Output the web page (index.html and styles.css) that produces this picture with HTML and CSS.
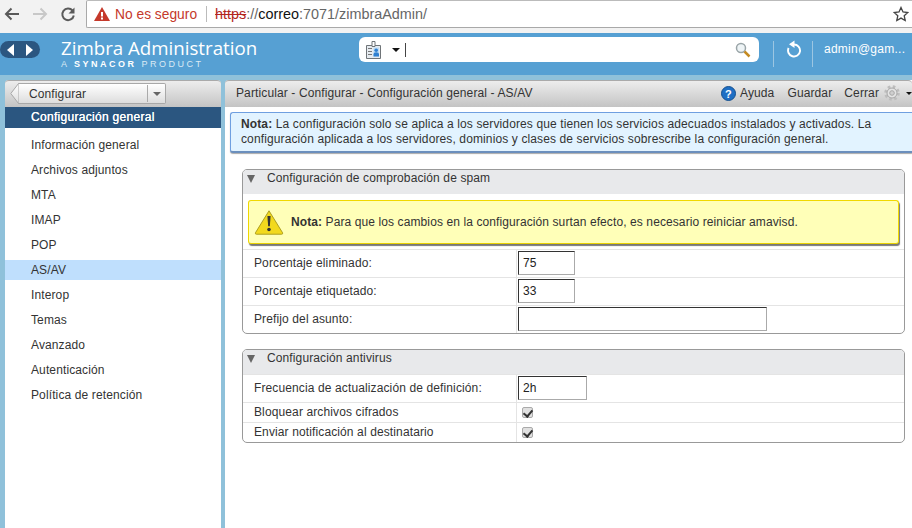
FILE: index.html
```html
<!DOCTYPE html>
<html>

<head>
    <meta charset="utf-8">
    <title>Zimbra Administration</title>
    <link rel="stylesheet" href="styles.css">
</head>

<body>
    <!-- browser chrome -->
    <div class="browser">
        <div class="nav-icons">
            <svg width="18" height="16" viewBox="0 0 18 16"><path d="M16 8H3.500M8.500 2.500L3 8l5.500 5.500" fill="none" stroke="#5a5a5a" stroke-width="2"/></svg>
            <svg width="18" height="16" viewBox="0 0 18 16"><path d="M2 8h12.500M9.500 2.500L15 8l-5.500 5.500" fill="none" stroke="#c8c8c8" stroke-width="2"/></svg>
            <svg width="18" height="16" viewBox="0 0 18 16"><path d="M13.500 4.500A5.800 5.800 0 1 0 14.800 9.500" fill="none" stroke="#5a5a5a" stroke-width="2"/><path d="M15.500 1.500v6h-6z" fill="#5a5a5a"/></svg>
        </div>
        <div class="urlbar">
            <svg class="warn" width="16" height="14" viewBox="0 0 16 14"><path d="M8 0l8 14H0z" fill="#c5392b"/><path d="M7 5h2v4.500H7zM7 10.500h2v2H7z" fill="#fff"/></svg>
            <span class="not-secure">No es seguro</span>
            <span class="url-sep"></span>
            <span class="url"><span class="https">https</span><span class="url-dim">://</span>correo<span class="url-dim">:7071/zimbraAdmin/</span></span>
            <svg class="star" width="16" height="16" viewBox="0 0 16 16"><path d="M8 1.500l2 4.500 4.800.5-3.600 3.200 1 4.800L8 12.100l-4.200 2.400 1-4.800L1.200 6.500 6 6z" fill="none" stroke="#444" stroke-width="1.300"/></svg>
        </div>
    </div>

    <!-- zimbra header -->
    <div class="header">
        <div class="history">
            <svg width="10" height="12" viewBox="0 0 10 12"><path d="M8 0v12L1 6z" fill="#fff"/></svg>
            <svg width="10" height="12" viewBox="0 0 10 12"><path d="M2 0v12l7-6z" fill="#fff"/></svg>
        </div>
        <div class="logo">
            <div class="logo-name">Zimbra Administration</div>
            <div class="logo-sub">A <b>SYNACOR</b> PRODUCT</div>
        </div>
        <div class="search">
            <svg width="15" height="18" viewBox="0 0 15 18"><path d="M.5 4.500h14v13H.5z" fill="#e6ebf0" stroke="#6f7478"/><path d="M6 .5h3v5H6z" fill="#fff" stroke="#6f7478"/><path d="M7.500 6.500h5.500v9H7.500z" fill="#bcdcf6"/><circle cx="10.200" cy="9.300" r="1.800" fill="#2f7fd0"/><path d="M7.500 15.500v-2.500q0-1.700 2.700-1.700t2.800 1.700v2.500z" fill="#2f7fd0"/><path d="M2 7h4v1H2zM2 10h4v1H2zM2 13h4v1H2z" fill="#777"/></svg>
            <span class="caret-down"></span>
            <span class="search-cursor"></span>
            <svg class="search-glass" width="16" height="16" viewBox="0 0 16 16"><circle cx="6" cy="6" r="4.500" fill="#eef4f6" stroke="#9aa5a8" stroke-width="1.500"/><path d="M9.500 9.500l5 5" stroke="#c48a22" stroke-width="2.500"/></svg>
        </div>
        <span class="head-sep first"></span>
        <svg class="refresh" width="16" height="18" viewBox="0 0 16 18"><path d="M8 4.500A6 6 0 1 1 2.600 8" fill="none" stroke="#fff" stroke-width="1.900"/><path d="M8.500.5v7.500L3 4.200z" fill="#fff"/></svg>
        <span class="head-sep"></span>
        <span class="user">admin@gam...</span>
    </div>

    <div class="main">
        <!-- left panel -->
        <div class="side">
            <div class="side-top">
                <div class="crumb">
                    <svg class="crumb-tip" width="9" height="21" viewBox="0 0 9 21">
                        <defs><linearGradient id="tipfill" x1="0" y1="0" x2="0" y2="1"><stop offset="0" stop-color="#fff"/><stop offset="1" stop-color="#ddd"/></linearGradient></defs>
                        <path d="M9 .5H8.500L.8 10.500l7.700 10H9z" fill="url(#tipfill)" stroke="#a8a8a8"/>
                    </svg>
                    <span class="crumb-label">Configurar</span>
                    <span class="crumb-arrow"></span>
                </div>
            </div>
            <div class="side-title">Configuración general</div>
            <ul class="side-list">
                <li>Información general</li>
                <li>Archivos adjuntos</li>
                <li>MTA</li>
                <li>IMAP</li>
                <li>POP</li>
                <li class="selected">AS/AV</li>
                <li>Interop</li>
                <li>Temas</li>
                <li>Avanzado</li>
                <li>Autenticación</li>
                <li>Política de retención</li>
            </ul>
        </div>

        <!-- content panel -->
        <div class="content">
            <div class="toolbar">
                <span class="path">Particular - Configurar - Configuración general - AS/AV</span>
                <svg class="help" width="15" height="15" viewBox="0 0 15 15"><circle cx="7.500" cy="7.500" r="7" fill="#1f6fc4" stroke="#15508f"/><text x="7.500" y="11.500" class="help-mark" text-anchor="middle">?</text></svg>
                <span class="tool ayuda">Ayuda</span>
                <span class="tool guardar">Guardar</span>
                <span class="tool cerrar">Cerrar</span>
                <svg class="gear" width="18" height="18" viewBox="0 0 18 18"><circle cx="9" cy="9" r="6.300" fill="none" stroke="#bdbdbd" stroke-width="3" stroke-dasharray="2.500 2.450"/><circle cx="9" cy="9" r="5" fill="#e4e4e4" stroke="#a8a8a8"/><circle cx="9" cy="9" r="2.300" fill="#cfcfcf" stroke="#a8a8a8"/></svg>
                <span class="caret-down small"></span>
            </div>

            <div class="info-note">
                <div><b>Nota:</b> La configuración solo se aplica a los servidores que tienen los servicios adecuados instalados y activados. La</div>
                <div>configuración aplicada a los servidores, dominios y clases de servicios sobrescribe la configuración general.</div>
            </div>

            <div class="section first-section">
                <div class="section-head"><span class="tri"></span>Configuración de comprobación de spam</div>
                <div class="warning">
                    <svg width="30" height="27" viewBox="0 0 32 28"><path d="M16 1.500L30.500 25q.5 1.500-1 1.500H2.500q-1.500 0-1-1.500z" fill="#f2d91d" stroke="#a89a1c"/><path d="M14.300 7h3.400l-.8 11h-1.800z" fill="#333"/><circle cx="16" cy="21.500" r="1.900" fill="#333"/></svg>
                    <span><b>Nota:</b> Para que los cambios en la configuración surtan efecto, es necesario reiniciar amavisd.</span>
                </div>
                <div class="row">
                    <label>Porcentaje eliminado:</label>
                    <div class="cell"><input class="small-input" type="text" value="75"></div>
                </div>
                <div class="row">
                    <label>Porcentaje etiquetado:</label>
                    <div class="cell"><input class="small-input" type="text" value="33"></div>
                </div>
                <div class="row">
                    <label>Prefijo del asunto:</label>
                    <div class="cell"><input class="wide-input" type="text"></div>
                </div>
            </div>

            <div class="section">
                <div class="section-head"><span class="tri"></span>Configuración antivirus</div>
                <div class="row">
                    <label>Frecuencia de actualización de definición:</label>
                    <div class="cell"><input class="mid-input" type="text" value="2h"></div>
                </div>
                <div class="row check-row">
                    <label>Bloquear archivos cifrados</label>
                    <div class="cell"><span class="check"></span></div>
                </div>
                <div class="row check-row">
                    <label>Enviar notificación al destinatario</label>
                    <div class="cell"><span class="check"></span></div>
                </div>
            </div>
        </div>
    </div>
</body>

</html>
```
FILE: styles.css
```css
* {
    box-sizing: border-box;
}

html, body {
    margin: 0;
    height: 528px;
    overflow: hidden;
}

body {
    width: 912px;
    font-family: "Liberation Sans", Arial, sans-serif;
    font-size: 12px;
    letter-spacing: .12px;
    color: #333;
    background: #fff;
}

/* browser */
.browser {
    height: 33px;
    background: #f2f2f2;
    display: flex;
    align-items: flex-start;
    padding-bottom: 5px;
}

.nav-icons {
    width: 86px;
    height: 28px;
    display: flex;
    align-items: center;
    gap: 10px;
    padding-left: 3px;
}

.urlbar {
    flex: 1;
    height: 28px;
    background: #fff;
    border: 1px solid #a9a9a9;
    border-right: 0;
    border-top-color: #bbb;
    border-radius: 2px 0 0 2px;
    display: flex;
    align-items: center;
    padding-left: 7px;
    font-size: 13.800px;
    letter-spacing: 0;
}

.warn {
    margin-right: 5px;
}

.not-secure {
    color: #c5392b;
}

.url-sep {
    width: 1px;
    height: 16px;
    background: #bbb;
    margin: 0 8px 0 9px;
}

.url {
    color: #111;
    font-size: 14.400px;
}

.url-dim {
    color: #666;
}

.https {
    color: #b3261e;
    text-decoration: line-through;
}

.star {
    margin-left: auto;
    margin-right: 3px;
}

/* header */
.header {
    height: 47px;
    background: linear-gradient(#56a0d3 0, #56a0d3 42px, #8fc1da 42px);
    display: flex;
    align-items: flex-start;
}

.history {
    width: 40px;
    height: 17px;
    margin-top: 8px;
    background: #2b5680;
    border-radius: 9px;
    display: flex;
    align-items: center;
    justify-content: center;
    gap: 8px;
}

.logo {
    margin-left: 21px;
    width: 298px;
    color: #fff;
}

.logo-name {
    font-family: "Open Sans", "Liberation Sans", sans-serif;
    font-size: 18.700px;
    font-weight: 500;
    letter-spacing: 0;
    line-height: 22px;
    margin-top: 4px;
}

.logo-sub {
    font-size: 9px;
    line-height: 10px;
    letter-spacing: 2.500px;
    color: #dbeaf4;
}

.logo-sub b {
    color: #fff;
}

.search {
    width: 400px;
    height: 25px;
    margin-top: 4px;
    background: #fff;
    border-radius: 6px;
    display: flex;
    align-items: center;
    padding: 0 7px;
}

.caret-down {
    width: 0;
    height: 0;
    border-left: 4px solid transparent;
    border-right: 4px solid transparent;
    border-top: 4px solid #111;
    margin-left: 11px;
}

.caret-down.small {
    flex-shrink: 0;
    border-left-width: 3px;
    border-right-width: 3px;
    border-top-width: 3px;
    margin-left: 5px;
}

.search-cursor {
    width: 1px;
    height: 14px;
    background: #444;
    margin-left: 5px;
}

.search-glass {
    margin-left: auto;
    margin-right: 1px;
}

.head-sep {
    width: 1px;
    height: 26px;
    margin-top: 8px;
    background: #9cc6e2;
}

.head-sep.first {
    margin-left: 14px;
}

.refresh {
    margin: 7px 10px 0 12px;
}

.user {
    color: #fff;
    margin: 8px 0 0 11px;
    white-space: nowrap;
    line-height: 16px;
    letter-spacing: .25px;
}

/* panels */
.main {
    height: 448px;
    background: #8fc1da;
    display: flex;
    gap: 4px;
    padding-left: 5px;
}

.side {
    width: 216px;
    background: #fff;
    border-radius: 4px 4px 0 0;
}

.side-top,
.toolbar {
    height: 27px;
    background: linear-gradient(#ededed, #c4c4c4);
    border-top: 1px solid #aaa;
    border-radius: 4px 4px 0 0;
}

.side-top {
    padding: 2px 0 0 13px;
}

.crumb {
    width: 148px;
    height: 21px;
    display: flex;
    align-items: center;
    background: linear-gradient(#fff, #ddd);
    border: 1px solid #a8a8a8;
    border-left: 0;
    border-radius: 0 2px 2px 0;
    position: relative;
    padding-left: 11px;
}

.crumb-tip {
    position: absolute;
    left: -8px;
    top: -1px;
}

.crumb-label {
    flex: 1;
}

.crumb-arrow {
    width: 18px;
    height: 17px;
    border-left: 1px solid #aaa;
    position: relative;
}

.crumb-arrow::after {
    content: "";
    position: absolute;
    left: 5px;
    top: 7px;
    border-left: 4px solid transparent;
    border-right: 4px solid transparent;
    border-top: 4px solid #666;
}

.side-title {
    height: 21px;
    background: #2b5680;
    color: #fff;
    padding: 3px 0 0 26px;
    line-height: 15px;
    letter-spacing: .3px;
    text-shadow: 0 0 0 #fff;
}

.side-list {
    list-style: none;
    margin: 7px 0 0;
    padding: 0;
}

.side-list li {
    height: 20px;
    line-height: 20px;
    margin-bottom: 5px;
    padding-left: 26px;
}

.side-list .selected {
    background: #bfdffd;
}

.content {
    flex: 1;
    min-width: 0;
    background: #fff;
    border-radius: 4px 0 0 0;
}

.toolbar {
    display: flex;
    align-items: center;
    padding: 0 0 2px 11px;
}

.path {
    width: 485px;
    flex-shrink: 0;
}

.help {
    flex-shrink: 0;
    margin-right: 4px;
}

.help-mark {
    font-family: "Liberation Sans", sans-serif;
    font-size: 11px;
    font-weight: bold;
    fill: #fff;
}

.guardar {
    margin-left: 13px;
}

.cerrar {
    margin-left: 12px;
}

.gear {
    flex-shrink: 0;
    margin-left: 4px;
}

.info-note {
    margin: 5px 0 0 5px;
    height: 41px;
    background: #e2f3ff;
    border: 1px solid #6f9fe0;
    border-bottom: 2px solid #6b8fbd;
    border-right: 0;
    border-radius: 3px 0 0 3px;
    padding: 4px 6px 0 10px;
    line-height: 15px;
    white-space: nowrap;
    box-shadow: 0 1px 1px #aaa;
}

.section {
    margin: 15px 7px 0 17px;
    border: 1px solid #999;
    border-radius: 5px;
    overflow: hidden;
}

.first-section {
    margin-top: 16px;
}

.section-head {
    height: 24px;
    background: #e8e9eb;
    padding: 1px 0 0 24px;
    line-height: 15px;
    position: relative;
}

.tri {
    position: absolute;
    left: 4px;
    top: 5px;
    border-left: 4px solid transparent;
    border-right: 4px solid transparent;
    border-top: 8px solid #666;
}

.warning {
    margin: 6px 5px 5px;
    height: 44px;
    background: #ffffb8;
    border: 1px solid #f0d800;
    border-bottom-color: #e8d000;
    border-radius: 3px;
    box-shadow: 1px 2px 1px #777;
    display: flex;
    align-items: center;
    gap: 7px;
    padding-left: 5px;
    letter-spacing: .1px;
}

.row {
    display: flex;
    height: 28px;
    border-top: 1px solid #e4e4e4;
}

.row label {
    width: 273px;
    padding: 0 0 1px 11px;
    display: flex;
    align-items: center;
}

.cell {
    flex: 1;
    border-left: 1px solid #e4e4e4;
    display: flex;
    align-items: center;
    padding: 0 0 1px 1px;
}

input {
    height: 24px;
    border: 1px solid #aaa;
    border-top-color: #333;
    border-left-color: #333;
    padding: 0 4px;
    font-family: "Liberation Sans", Arial, sans-serif;
    font-size: 12px;
    color: #222;
    background: #fff;
    outline: 0;
}

.small-input {
    width: 57px;
}

.wide-input {
    width: 249px;
}

.mid-input {
    width: 69px;
}

.check-row {
    height: 20px;
}

.check {
    width: 11px;
    height: 11px;
    margin-left: 4px;
    border: 1px solid #aaa;
    border-radius: 2px;
    background: #e0e0e0;
    position: relative;
}

.check::after {
    content: "";
    position: absolute;
    left: 2px;
    top: 0;
    width: 4px;
    height: 7px;
    border-right: 2px solid #333;
    border-bottom: 2px solid #333;
    transform: rotate(40deg);
}
```
